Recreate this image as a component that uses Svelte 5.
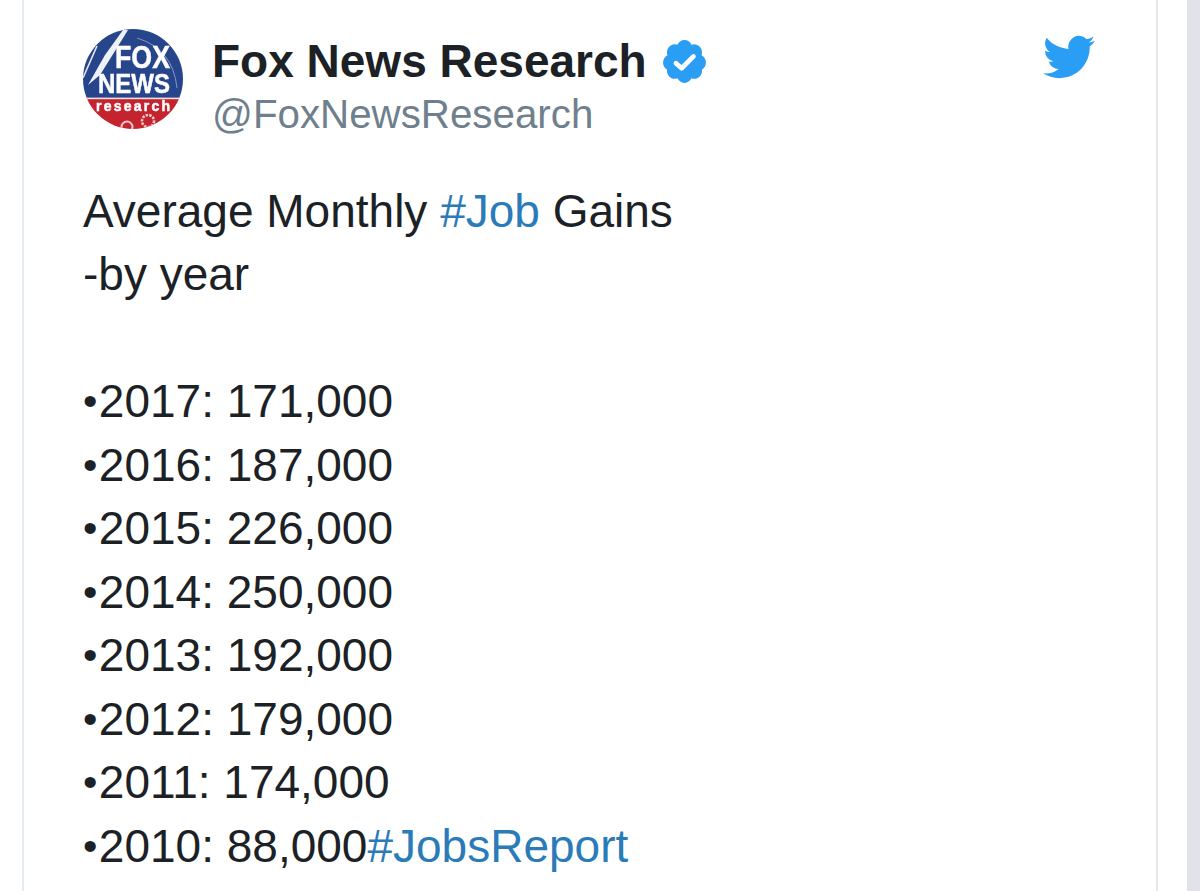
<script>
  const years = [
    ['2017', '171,000'], ['2016', '187,000'], ['2015', '226,000'], ['2014', '250,000'],
    ['2013', '192,000'], ['2012', '179,000'], ['2011', '174,000']
  ];
</script>

<div class="page">
  <article class="card">
    <header class="head">
      <svg class="logo" viewBox="0 0 100 100" aria-hidden="true">
        <defs><clipPath id="disc"><circle cx="50" cy="50" r="50" /></clipPath></defs>
        <g clip-path="url(#disc)">
          <rect width="100" height="70" fill="#27458a" />
          <rect y="70" width="100" height="30" fill="#c5242f" />
          <rect y="68.6" width="100" height="1.6" fill="#f3dfe0" />
          <path d="M5 56 L22 26 L40 1 L45 1 L32 22 L17 46 Z" fill="#eef2f8" />
          <path d="M0 49 L14 17" fill="none" stroke="#e4eaf4" stroke-width="1.6" />
          <path d="M54 9 Q90 20 94 59" fill="none" stroke="#8ea2cc" stroke-width="0.9" />
          <text x="32" y="39" textLength="55" lengthAdjust="spacingAndGlyphs" class="fox">FOX</text>
          <text x="15" y="64" textLength="72" lengthAdjust="spacingAndGlyphs" class="news">NEWS</text>
          <text x="13" y="82" textLength="74" lengthAdjust="spacing" class="res">research</text>
          <circle cx="65" cy="92" r="6" fill="none" stroke="#f3c9cb" stroke-width="2.6" stroke-dasharray="2.4 1.2" />
          <circle cx="44" cy="98" r="5.5" fill="none" stroke="#f3c9cb" stroke-width="2" />
        </g>
      </svg>
      <div class="who">
        <div class="name">
          <span>Fox News Research</span>
          <svg class="badge" viewBox="0 0 24 24" aria-hidden="true">
            <path fill="#2a9df4" d="M22.5 12.5c0-1.58-.875-2.95-2.148-3.6.154-.435.238-.905.238-1.4 0-2.21-1.71-3.998-3.818-3.998-.47 0-.92.084-1.336.25C14.818 2.415 13.51 1.5 12 1.5s-2.816.917-3.437 2.25c-.415-.165-.866-.25-1.336-.25-2.11 0-3.818 1.79-3.818 4 0 .494.083.964.237 1.4-1.272.65-2.147 2.018-2.147 3.6 0 1.495.782 2.798 1.942 3.486-.02.17-.032.34-.032.514 0 2.21 1.708 4 3.818 4 .47 0 .92-.086 1.335-.25.62 1.334 1.926 2.25 3.437 2.25 1.512 0 2.818-.916 3.437-2.25.415.163.865.248 1.336.248 2.11 0 3.818-1.79 3.818-4 0-.174-.012-.344-.033-.513 1.158-.687 1.943-1.99 1.943-3.484z" />
            <path fill="none" stroke="#fff" stroke-width="2.3" stroke-linecap="round" stroke-linejoin="round" d="M7.8 12.8l2.8 2.5 5.8-5.8" />
          </svg>
        </div>
        <div class="handle">@FoxNewsResearch</div>
      </div>
      <svg class="bird" viewBox="0 0 24 24" aria-hidden="true">
        <path fill="#2a9df4" d="M23.953 4.57a10 10 0 01-2.825.775 4.958 4.958 0 002.163-2.723c-.951.555-2.005.959-3.127 1.184a4.92 4.92 0 00-8.384 4.482C7.69 8.095 4.067 6.13 1.64 3.162a4.822 4.822 0 00-.666 2.475c0 1.71.87 3.213 2.188 4.096a4.904 4.904 0 01-2.228-.616v.06a4.923 4.923 0 003.946 4.827 4.996 4.996 0 01-2.212.085 4.936 4.936 0 004.604 3.417 9.867 9.867 0 01-6.102 2.105c-.39 0-.779-.023-1.17-.067a13.995 13.995 0 007.557 2.209c9.053 0 13.998-7.496 13.998-13.985 0-.21 0-.42-.015-.63A9.935 9.935 0 0024 4.59z" />
      </svg>
    </header>

    <div class="body">
      <p>Average Monthly <a href="#job">#Job</a> Gains</p>
      <p>-by year</p>
      <p class="blank">&nbsp;</p>
      {#each years as [y, v]}
        <p><span class="dot">•</span>{y}: {v}</p>
      {/each}
      <p><span class="dot">•</span>2010: 88,000<a href="#jobsreport">#JobsReport</a></p>
    </div>
  </article>
  <div class="strip"></div>
</div>

<style>
  :global(body) { margin: 0; background: #fff; }
  .page {
    display: flex;
    width: 1200px;
    height: 891px;
    overflow: hidden;
    padding-left: 22px;
    box-sizing: border-box;
    font-family: "Liberation Sans", Arial, sans-serif;
  }
  .card {
    width: 1136px;
    box-sizing: border-box;
    border-left: 2px solid #e4ecf2;
    border-right: 2px solid #e4e7ec;
    padding: 29px 0 0 59px;
    position: relative;
  }
  .strip {
    margin-left: 29px;
    flex: 1;
    background: #e1e3e8;
  }
  .head { display: flex; align-items: flex-start; }
  .logo { width: 100px; height: 100px; flex: none; filter: blur(0.4px); }
  .logo text {
    font-family: "Liberation Sans", Arial, sans-serif;
    font-weight: 700;
    fill: #fff;
    stroke: #fff;
    stroke-width: 0.5px;
  }
  .fox { font-size: 31px; }
  .news { font-size: 28px; }
  .res { font-size: 14px; }
  .who { margin-left: 29px; margin-top: 6px; }
  .name {
    display: flex;
    align-items: center;
    gap: 13px;
    font-size: 46px;
    font-weight: 700;
    line-height: 53px;
    color: #1c2126;
    white-space: nowrap;
  }
  .badge { width: 49px; height: 49px; flex: none; }
  .handle {
    font-size: 40.3px;
    line-height: 53px;
    color: #6f7f8d;
    white-space: nowrap;
  }
  .bird { width: 52px; height: 52px; position: absolute; left: 1019px; top: 31px; }
  .body {
    margin-top: 39px;
    font-size: 46px;
    line-height: 63.45px;
    color: #1c2126;
  }
  .body p { margin: 0; white-space: nowrap; }
  .dot {
    font-size: 41px;
    line-height: 0;
    margin-right: 1.5px;
    vertical-align: 2px;
  }
  a { color: #2b7bb9; text-decoration: none; }
</style>
